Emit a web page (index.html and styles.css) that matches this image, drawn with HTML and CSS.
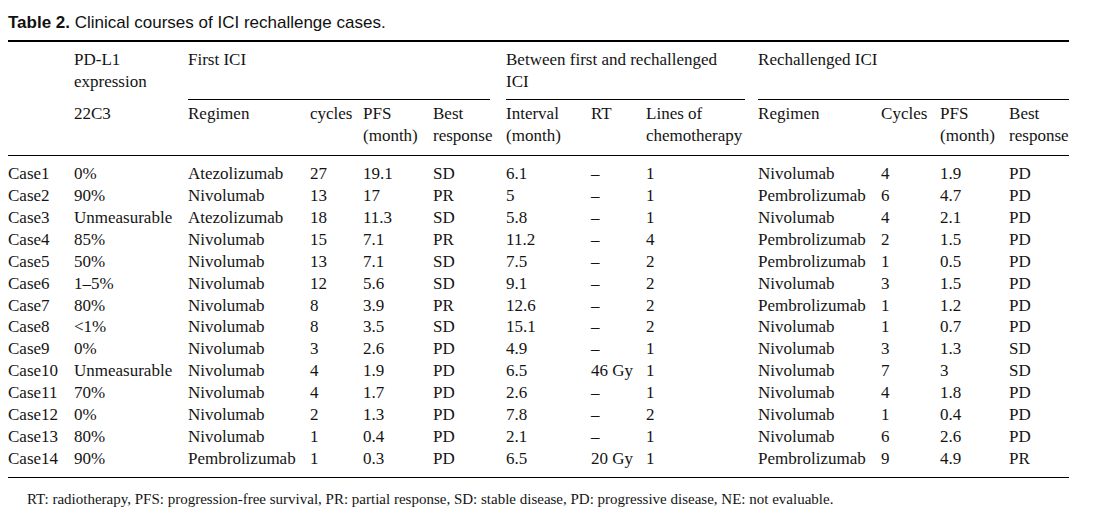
FILE: index.html
```html
<!DOCTYPE html>
<html>
<head>
<meta charset="utf-8">
<link rel="stylesheet" href="styles.css">
</head>
<body>
<div class="page">
  <div class="title"><b>Table 2.</b> Clinical courses of ICI rechallenge cases.</div>
  <table class="ici">
    <colgroup>
      <col style="width:66px"><col style="width:114px"><col style="width:122px"><col style="width:53px">
      <col style="width:70px"><col style="width:73px"><col style="width:85px"><col style="width:55px">
      <col style="width:112px"><col style="width:123px"><col style="width:59px"><col style="width:69px">
      <col style="width:60px">
    </colgroup>
    <thead>
      <tr class="h1">
        <th></th>
        <th class="pd">PD-L1<br>expression</th>
        <th colspan="4"><div class="grp g1">First ICI</div></th>
        <th colspan="3"><div class="grp g2">Between first and rechallenged<br>ICI</div></th>
        <th colspan="4"><div class="grp">Rechallenged ICI</div></th>
      </tr>
      <tr class="h2">
        <th></th>
        <th>22C3</th>
        <th>Regimen</th>
        <th>cycles</th>
        <th>PFS<br>(month)</th>
        <th>Best<br>response</th>
        <th>Interval<br>(month)</th>
        <th>RT</th>
        <th>Lines of<br>chemotherapy</th>
        <th>Regimen</th>
        <th>Cycles</th>
        <th>PFS<br>(month)</th>
        <th>Best<br>response</th>
      </tr>
    </thead>
    <tbody>
      <tr><td>Case1</td><td>0%</td><td>Atezolizumab</td><td>27</td><td>19.1</td><td>SD</td><td>6.1</td><td>–</td><td>1</td><td>Nivolumab</td><td>4</td><td>1.9</td><td>PD</td></tr>
      <tr><td>Case2</td><td>90%</td><td>Nivolumab</td><td>13</td><td>17</td><td>PR</td><td>5</td><td>–</td><td>1</td><td>Pembrolizumab</td><td>6</td><td>4.7</td><td>PD</td></tr>
      <tr><td>Case3</td><td>Unmeasurable</td><td>Atezolizumab</td><td>18</td><td>11.3</td><td>SD</td><td>5.8</td><td>–</td><td>1</td><td>Nivolumab</td><td>4</td><td>2.1</td><td>PD</td></tr>
      <tr><td>Case4</td><td>85%</td><td>Nivolumab</td><td>15</td><td>7.1</td><td>PR</td><td>11.2</td><td>–</td><td>4</td><td>Pembrolizumab</td><td>2</td><td>1.5</td><td>PD</td></tr>
      <tr><td>Case5</td><td>50%</td><td>Nivolumab</td><td>13</td><td>7.1</td><td>SD</td><td>7.5</td><td>–</td><td>2</td><td>Pembrolizumab</td><td>1</td><td>0.5</td><td>PD</td></tr>
      <tr><td>Case6</td><td>1–5%</td><td>Nivolumab</td><td>12</td><td>5.6</td><td>SD</td><td>9.1</td><td>–</td><td>2</td><td>Nivolumab</td><td>3</td><td>1.5</td><td>PD</td></tr>
      <tr><td>Case7</td><td>80%</td><td>Nivolumab</td><td>8</td><td>3.9</td><td>PR</td><td>12.6</td><td>–</td><td>2</td><td>Pembrolizumab</td><td>1</td><td>1.2</td><td>PD</td></tr>
      <tr><td>Case8</td><td>&lt;1%</td><td>Nivolumab</td><td>8</td><td>3.5</td><td>SD</td><td>15.1</td><td>–</td><td>2</td><td>Nivolumab</td><td>1</td><td>0.7</td><td>PD</td></tr>
      <tr><td>Case9</td><td>0%</td><td>Nivolumab</td><td>3</td><td>2.6</td><td>PD</td><td>4.9</td><td>–</td><td>1</td><td>Nivolumab</td><td>3</td><td>1.3</td><td>SD</td></tr>
      <tr><td>Case10</td><td>Unmeasurable</td><td>Nivolumab</td><td>4</td><td>1.9</td><td>PD</td><td>6.5</td><td>46 Gy</td><td>1</td><td>Nivolumab</td><td>7</td><td>3</td><td>SD</td></tr>
      <tr><td>Case11</td><td>70%</td><td>Nivolumab</td><td>4</td><td>1.7</td><td>PD</td><td>2.6</td><td>–</td><td>1</td><td>Nivolumab</td><td>4</td><td>1.8</td><td>PD</td></tr>
      <tr><td>Case12</td><td>0%</td><td>Nivolumab</td><td>2</td><td>1.3</td><td>PD</td><td>7.8</td><td>–</td><td>2</td><td>Nivolumab</td><td>1</td><td>0.4</td><td>PD</td></tr>
      <tr><td>Case13</td><td>80%</td><td>Nivolumab</td><td>1</td><td>0.4</td><td>PD</td><td>2.1</td><td>–</td><td>1</td><td>Nivolumab</td><td>6</td><td>2.6</td><td>PD</td></tr>
      <tr><td>Case14</td><td>90%</td><td>Pembrolizumab</td><td>1</td><td>0.3</td><td>PD</td><td>6.5</td><td>20 Gy</td><td>1</td><td>Pembrolizumab</td><td>9</td><td>4.9</td><td>PR</td></tr>
    </tbody>
  </table>
  <div class="note">RT: radiotherapy, PFS: progression-free survival, PR: partial response, SD: stable disease, PD: progressive disease, NE: not evaluable.</div>
</div>
</body>
</html>
```

FILE: styles.css
```css
html, body {
  margin: 0;
  padding: 0;
  background: #ffffff;
  color: #141414;
}

.page {
  padding: 0 8px;
}

.title {
  font-family: "Liberation Sans", Arial, sans-serif;
  font-size: 17px;
  line-height: 20px;
  padding-top: 13px;
  margin-bottom: 7px;
  color: #111;
  white-space: nowrap;
}

.title b {
  font-weight: bold;
}

.ici {
  width: 1061px;
  table-layout: fixed;
  border-collapse: separate;
  border-spacing: 0;
  border-top: 2px solid #000;
  border-bottom: 1px solid #000;
  font-family: "Liberation Serif", "Times New Roman", serif;
  font-size: 17px;
  line-height: 22px;
}

.ici th,
.ici td {
  padding: 0;
  text-align: left;
  vertical-align: top;
  font-weight: normal;
  white-space: nowrap;
}

.h1 th {
  padding: 0;
}

.h1 th.pd {
  padding-top: 7px;
}

.grp {
  padding-top: 7px;
  height: 50px;
  border-bottom: 1px solid #000;
}

.grp.g1 {
  margin-right: 16px;
}

.grp.g2 {
  margin-right: 13px;
}

.h2 th {
  padding-top: 3px;
  padding-bottom: 8px;
  border-bottom: 1px solid #000;
}

.ici tbody td {
  line-height: 21.92px;
}

.ici tbody tr:first-child td {
  padding-top: 7px;
}

.ici tbody tr:last-child td {
  padding-bottom: 7px;
}

.note {
  font-family: "Liberation Serif", "Times New Roman", serif;
  font-size: 15px;
  line-height: 20px;
  margin-top: 11px;
  padding-left: 19px;
  white-space: nowrap;
}
```
